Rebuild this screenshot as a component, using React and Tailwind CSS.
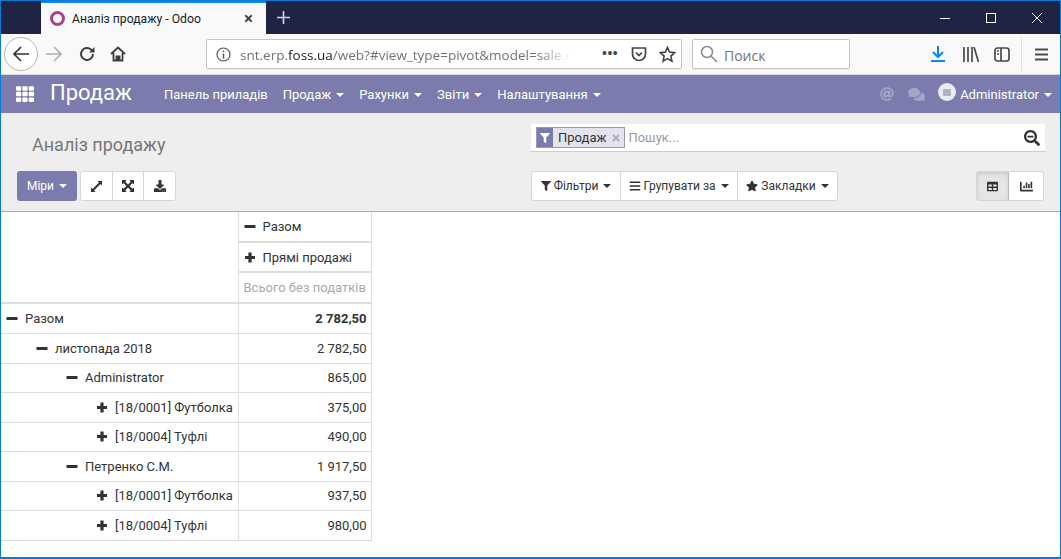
import React from "react";
import { FaTh, FaAt, FaComments, FaFilter, FaBars, FaStar, FaTable, FaChartBar, FaDownload, FaTimes, FaSearchMinus } from "react-icons/fa";

const Caret = ({ cls = "border-t-white" }) => (
  <span className={`inline-block w-0 h-0 ml-[5px] border-x-[4px] border-x-transparent border-t-[4px] ${cls}`} />
);

const Menu = ({ children, caret = true }) => (
  <span className="flex items-center text-[13px] text-white whitespace-nowrap">
    {children}
    {caret && <Caret />}
  </span>
);

const rows = [
  { indent: "pl-[5px]", h: "h-[30px]", icon: "minus", label: "Разом", value: "2 782,50", bold: true },
  { indent: "pl-[35px]", h: "h-[30px]", icon: "minus", label: "листопада 2018", value: "2 782,50" },
  { indent: "pl-[65px]", h: "h-[29px]", icon: "minus", label: "Administrator", value: "865,00" },
  { indent: "pl-[95px]", h: "h-[30px]", icon: "plus", label: "[18/0001] Футболка", value: "375,00" },
  { indent: "pl-[95px]", h: "h-[29px]", icon: "plus", label: "[18/0004] Туфлі", value: "490,00" },
  { indent: "pl-[65px]", h: "h-[30px]", icon: "minus", label: "Петренко С.М.", value: "1 917,50" },
  { indent: "pl-[95px]", h: "h-[29px]", icon: "plus", label: "[18/0001] Футболка", value: "937,50" },
  { indent: "pl-[95px]", h: "h-[30px]", icon: "plus", label: "[18/0004] Туфлі", value: "980,00" },
];

const Sign = ({ icon }) =>
  icon === "minus" ? (
    <svg className="shrink-0" width="12" height="12" viewBox="0 0 12 12" fill="#333"><rect x="0.500" y="4" width="11" height="3" rx="0.500" /></svg>
  ) : (
    <svg className="shrink-0" width="12" height="12" viewBox="0 0 12 12" fill="#333"><path d="M4.400 0.500h3.200v3.400H11v3.200H7.600v3.400H4.400V7.100H1V3.900h3.400z" /></svg>
  );

export default function App() {
  return (
    <div className="w-[1061px] h-[559px] overflow-hidden border border-[#0a7ad6] border-b-2 flex flex-col bg-white font-['Roboto',sans-serif]">
      {/* tab strip */}
      <div className="h-[33px] shrink-0 bg-[#1f2344] flex items-stretch">
        <div className="w-[40px] shrink-0" />
        <div className="w-[225px] shrink-0 bg-[#f9f9fa] border-t-2 border-[#0a84ff] flex items-center pl-[9px] pr-[12px] font-['Roboto',sans-serif] text-[12.200px] text-[#1c1b22]">
          <span className="w-[15px] h-[15px] rounded-full border-[3px] border-[#a24689] shrink-0" />
          <span className="ml-[7px] mt-[1px] flex-1 whitespace-nowrap">Аналіз продажу - Odoo</span>
          <FaTimes className="text-[#444] w-[11px] h-[11px]" />
        </div>
        <div className="w-[34px] flex items-center justify-center">
          <svg width="15" height="15" viewBox="0 0 15 15" stroke="#d5d6de" strokeWidth="1.600"><path d="M7.500 1v13M1 7.500h13" /></svg>
        </div>
        <div className="flex-1" />
        <div className="flex items-center pr-[18px] gap-[36px]">
          <svg width="10" height="10" viewBox="0 0 10 10" stroke="#fff"><path d="M0 5.500h10" /></svg>
          <svg width="10" height="10" viewBox="0 0 10 10" stroke="#fff" fill="none"><rect x=".5" y=".5" width="9" height="9" /></svg>
          <svg width="10" height="10" viewBox="0 0 10 10" stroke="#fff"><path d="M0 0l10 10M10 0L0 10" /></svg>
        </div>
      </div>

      {/* browser toolbar */}
      <div className="h-[41px] shrink-0 bg-[#f9f9fa] border-b border-[#d8d8da] flex items-center font-['Open_Sans',sans-serif]">
        <div className="ml-[3px] w-[34px] h-[34px] rounded-full border border-[#b5b5b7] bg-white flex items-center justify-center">
          <svg width="18" height="18" viewBox="0 0 18 18" fill="none" stroke="#333" strokeWidth="1.700"><path d="M17 9H2M9 2L2 9l7 7" /></svg>
        </div>
        <svg className="ml-[7px]" width="18" height="18" viewBox="0 0 18 18" fill="none" stroke="#b1b1b3" strokeWidth="1.700"><path d="M1 9h15M9 2l7 7-7 7" /></svg>
        <svg className="ml-[16px]" width="16" height="16" viewBox="0 0 16 16" fill="none" stroke="#3d3d3d" strokeWidth="2"><path d="M14 8a6 6 0 1 1-2-4.500L14 5" /><path d="M15.500 1v5.500H10z" fill="#3d3d3d" strokeWidth="0" /></svg>
        <svg className="ml-[15px]" width="16" height="16" viewBox="0 0 16 16" fill="none" stroke="#3d3d3d" strokeWidth="1.800"><path d="M1 8l7-6.500L15 8M3.500 7v7.500h9V7" /><path d="M6.500 15v-4.500h3V15" fill="#3d3d3d" /></svg>
        <div className="ml-[80px] w-[476px] h-[30px] bg-white border border-[#c6c6c8] rounded-[2px] flex items-center shadow-[0_1px_1px_rgba(0,0,0,0.08)]">
          <svg className="ml-[9px]" width="15" height="15" viewBox="0 0 15 15" fill="none" stroke="#555"><circle cx="7.500" cy="7.500" r="6.500" strokeWidth="1.200" /><path d="M7.500 6.500v5M7.500 3.500v1.600" strokeWidth="1.400" /></svg>
          <span className="ml-[9px] mt-[2px] w-[330px] overflow-hidden whitespace-nowrap text-[13.500px] text-[#737373] [mask-image:linear-gradient(to_right,black_90%,transparent)]">
            snt.erp.<span className="text-[#1c1b22]">foss.ua</span>/web?#view_type=pivot&amp;model=sale.re
          </span>
          <span className="ml-[32px] text-[#444] text-[13px] font-bold tracking-[0.5px] leading-none mb-[2px]">•••</span>
          <svg className="ml-[13px]" width="16" height="16" viewBox="0 0 16 16" fill="none" stroke="#444" strokeWidth="1.700"><path d="M1.500 2h13v6a6.500 6.500 0 0 1-13 0z" /><path d="M5 6.500l3 3 3-3" /></svg>
          <svg className="ml-[12px]" width="17" height="17" viewBox="0 0 17 17" fill="none" stroke="#444" strokeWidth="1.600"><path d="M8.500 1.500l2.100 4.600 5 .6-3.700 3.400 1 5-4.400-2.500-4.400 2.500 1-5L1.400 6.700l5-.6z" /></svg>
        </div>
        <div className="ml-[10px] w-[158px] h-[30px] bg-white border border-[#c6c6c8] rounded-[2px] flex items-center shadow-[0_1px_1px_rgba(0,0,0,0.08)]">
          <svg className="ml-[7px]" width="18" height="18" viewBox="0 0 18 18" fill="none" stroke="#8a8a8c" strokeWidth="1.500"><circle cx="7" cy="7" r="5.500" /><path d="M11 11l6 6" /></svg>
          <span className="ml-[6px] mt-[2px] text-[14px] text-[#737373]">Поиск</span>
        </div>
        <svg className="ml-[81px]" width="14" height="16" viewBox="0 0 14 16" fill="none" stroke="#0a84ff" strokeWidth="2"><path d="M7 0v10.500M2 6l5 5 5-5M0 15h14" /></svg>
        <svg className="ml-[18px]" width="16" height="15" viewBox="0 0 16 15" fill="none" stroke="#4a4a4a" strokeWidth="1.700"><path d="M1 0v15M5 0v15M9 0v15M11 0l4.500 15" /></svg>
        <svg className="ml-[15px]" width="16" height="15" viewBox="0 0 16 15" fill="none" stroke="#4a4a4a" strokeWidth="1.700"><rect x="1" y="1" width="14" height="13" rx="2.500" /><path d="M7 1v13M3 4h2M3 7h2" /></svg>
        <div className="ml-[11px] w-px h-[34px] bg-[#dfdfe1]" />
        <svg className="ml-[13px]" width="13" height="13" viewBox="0 0 13 13" stroke="#4a4a4a" strokeWidth="1.800"><path d="M0 1.500h13M0 6.500h13M0 11.500h13" /></svg>
      </div>

      {/* odoo navbar */}
      <div className="h-[38px] shrink-0 bg-[#7c7bad] flex items-center">
        <FaTh className="ml-[15px] w-[18px] h-[18px] text-white" />
        <span className="ml-[16px] text-[22px] leading-none text-white mb-[3px]">Продаж</span>
        <div className="ml-[32px] mt-[2px] flex items-center gap-[15px]">
          <Menu caret={false}>Панель приладів</Menu>
          <Menu>Продаж</Menu>
          <Menu>Рахунки</Menu>
          <Menu>Звіти</Menu>
          <Menu>Налаштування</Menu>
        </div>
        <div className="flex-1" />
        <FaAt className="w-[14px] h-[14px] text-[#a5a5c8]" />
        <FaComments className="ml-[14px] w-[17px] h-[17px] text-[#a5a5c8]" />
        <span className="ml-[13px] w-[18px] h-[18px] rounded-full bg-[#ecebf1] flex items-center justify-center mb-[4px]">
          <span className="w-[8px] h-[7px] bg-[#b3b3bd] rounded-[1px]" />
        </span>
        <span className="ml-[4px] mt-[2px] mr-[8px] flex items-center text-[13px] text-white">Administrator<Caret /></span>
      </div>

      {/* control panel */}
      <div className="h-[99px] shrink-0 bg-[#efeeef] border-b border-[#a9a9ab] flex flex-col">
        <div className="h-[50px] flex items-start">
          <span className="ml-[31px] mt-[19px] text-[18px] leading-[26px] text-[#777]">Аналіз продажу</span>
          <div className="flex-1" />
          <div className="mt-[11px] mr-[15px] w-[514px] h-[28px] bg-white border-b border-[#cccccc] flex items-center pl-[5px] pr-[4px]">
            <span className="h-[21px] flex items-stretch border border-[#9a9ab5] bg-[#e3e3ef] text-[13px] text-[#333]">
              <span className="w-[16px] bg-[#7c7bad] flex items-center justify-center">
                <FaFilter className="w-[10px] h-[10px] text-white" />
              </span>
              <span className="px-[5px] leading-[19px]">Продаж</span>
              <span className="flex items-center pr-[3px]"><FaTimes className="w-[10px] h-[10px] text-[#a9a9b5]" /></span>
            </span>
            <span className="ml-[3px] mt-[1px] text-[13px] text-[#999] flex-1">Пошук...</span>
            <FaSearchMinus className="w-[16px] h-[16px] text-[#333] mr-[1px]" />
          </div>
        </div>
        <div className="flex items-center mt-[8px] pl-[16px] pr-[16px] text-[12px]">
          <span className="w-[60px] h-[30px] rounded-[3px] bg-[#7c7bad] text-white flex items-center justify-center">Міри<Caret /></span>
          <div className="ml-[3px] flex h-[30px] bg-white border border-[#d5d5d5] rounded-[3px] text-[#333]">
            <span className="w-[32px] flex items-center justify-center border-r border-[#d5d5d5]">
              <svg width="11" height="11" viewBox="0 0 12 12" fill="#333"><path d="M7 0h5v5l-1.700-1.700L3.300 10.300 5 12H0V7l1.700 1.700 7-7z" /></svg>
            </span>
            <span className="w-[31px] flex items-center justify-center border-r border-[#d5d5d5]">
              <svg width="12" height="12" viewBox="0 0 12 12" fill="#333"><path d="M0 0h4.500L3.300 1.700 6 4.400l2.700-2.700L7.500 0H12v4.500l-1.700-1.200L7.600 6l2.700 2.700L12 7.500V12H7.500l1.200-1.700L6 7.600l-2.700 2.700L4.500 12H0V7.500l1.700 1.200L4.400 6 1.700 3.300 0 4.500z" /></svg>
            </span>
            <span className="w-[31px] flex items-center justify-center"><FaDownload className="w-[12px] h-[12px]" /></span>
          </div>
          <div className="ml-[355px] flex h-[30px] bg-white border border-[#d5d5d5] rounded-[3px] text-[#333]">
            <span className="w-[89px] flex items-center justify-center border-r border-[#d5d5d5]"><FaFilter className="w-[10px] h-[10px] mr-[3px]" />Фільтри<Caret cls="border-t-[#333]" /></span>
            <span className="w-[117px] flex items-center justify-center border-r border-[#d5d5d5]"><FaBars className="w-[12px] h-[12px] mr-[2px]" />Групувати за<Caret cls="border-t-[#333]" /></span>
            <span className="w-[99px] flex items-center justify-center"><FaStar className="w-[12px] h-[12px] mr-[3px]" />Закладки<Caret cls="border-t-[#333]" /></span>
          </div>
          <div className="flex-1" />
          <div className="flex h-[30px] rounded-[3px] border border-[#d5d5d5] text-[#333] bg-white">
            <span className="w-[32px] flex items-center justify-center bg-[#e6e6e6] border-r border-[#bbb] shadow-[inset_0_2px_4px_rgba(0,0,0,0.12)]"><FaTable className="w-[11px] h-[11px]" /></span>
            <span className="w-[34px] flex items-center justify-center"><FaChartBar className="w-[13px] h-[13px]" /></span>
          </div>
        </div>
      </div>

      {/* pivot */}
      <div className="flex-1 bg-white text-[13px] text-[#333]">
        <table className="table-fixed border-collapse w-[370px]">
          <colgroup>
            <col className="w-[237px]" />
            <col className="w-[133px]" />
          </colgroup>
          <tbody>
            <tr className="h-[30px]">
              <td rowSpan={3} className="border-r border-b-2 border-[#ddd]" />
              <td className="border-x border-b-2 border-[#ddd] pl-[5px] pt-[1px]">
                <span className="flex items-center"><Sign icon="minus" /><span className="ml-[7px]">Разом</span></span>
              </td>
            </tr>
            <tr className="h-[30px]">
              <td className="border-x border-b-2 border-[#ddd] pl-[5px] pt-[1px]">
                <span className="flex items-center"><Sign icon="plus" /><span className="ml-[7px]">Прямі продажі</span></span>
              </td>
            </tr>
            <tr className="h-[31px]">
              <td className="border-x border-b-2 border-[#ddd] pl-[5px] pt-[1px] text-[#aaa] whitespace-nowrap">Всього без податків</td>
            </tr>
            {rows.map((r, i) => (
              <tr key={i} className={r.h}>
                <td className={`border-r border-b border-[#ddd] pt-[1px] ${r.indent}`}>
                  <span className="flex items-center"><Sign icon={r.icon} /><span className="ml-[7px]">{r.label}</span></span>
                </td>
                <td className={`border-x border-b border-[#ddd] text-right pt-[1px] pr-[4px] ${r.bold ? "font-bold" : ""}`}>{r.value}</td>
              </tr>
            ))}
          </tbody>
        </table>
      </div>
    </div>
  );
}
